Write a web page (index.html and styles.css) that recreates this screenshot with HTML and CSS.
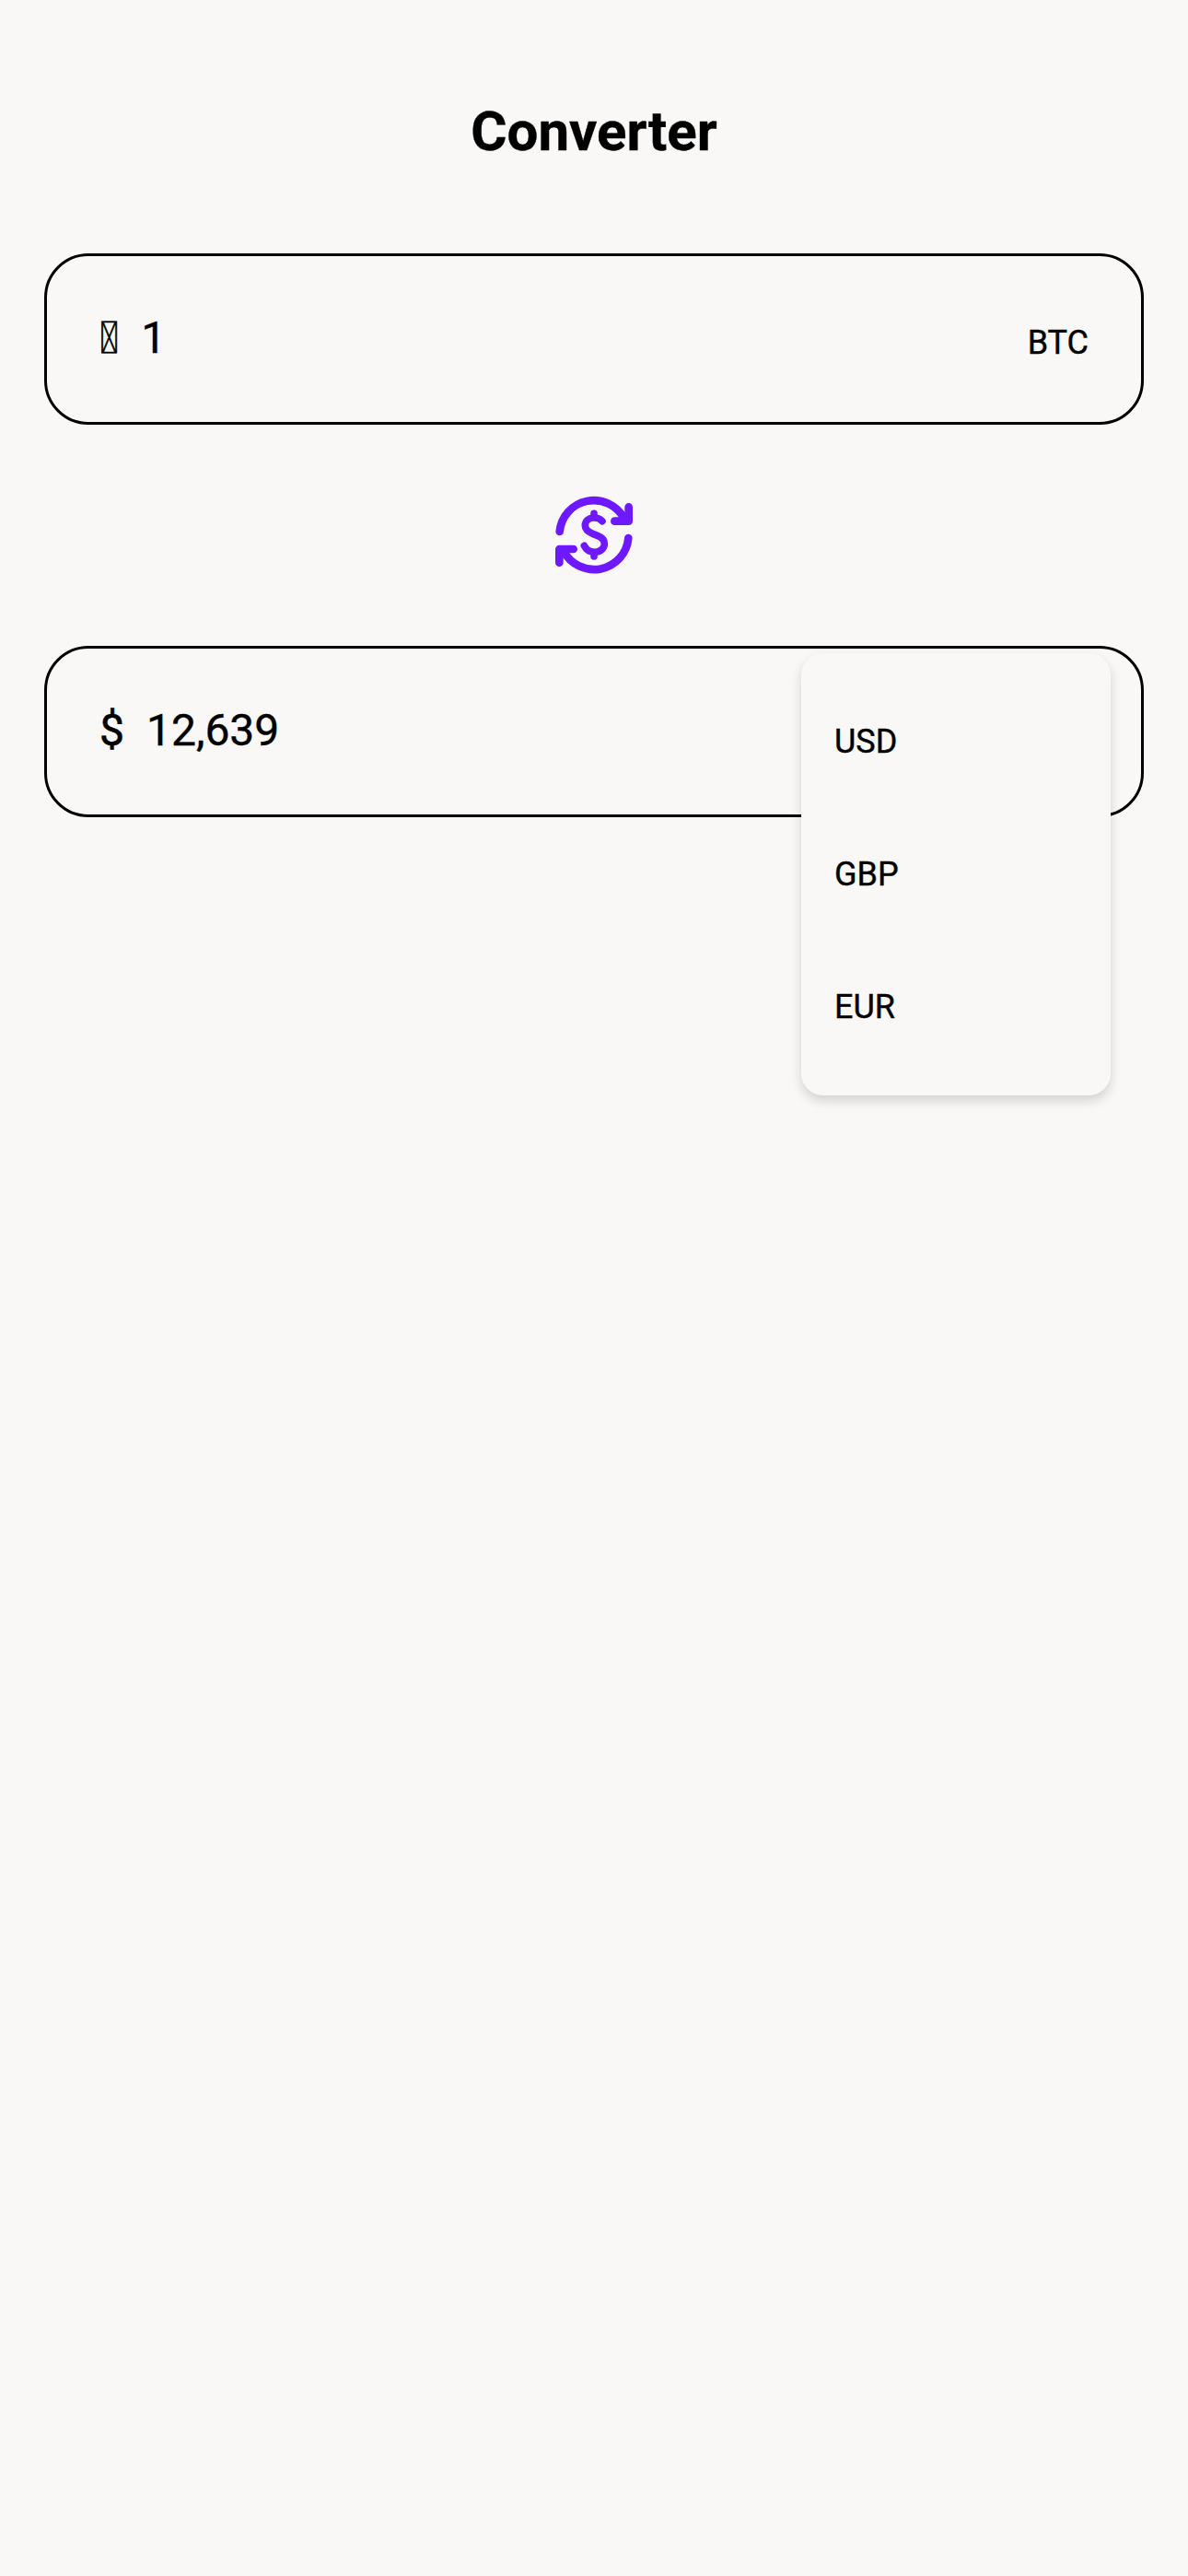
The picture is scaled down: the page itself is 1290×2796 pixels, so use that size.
FILE: index.html
```html
<!DOCTYPE html>
<html lang="en">
<head>
<meta charset="utf-8">
<title>Converter</title>
<link rel="stylesheet" href="styles.css">
</head>
<body>
<main class="screen">
  <h1 class="title">Converter</h1>
  <section class="field">
    <span class="amount"><span class="symbol">&#x10FFF0;</span><span>1</span></span>
    <span class="currency">BTC</span>
  </section>
  <button class="swap" aria-label="Swap currencies">
    <svg width="130" height="120" viewBox="0 0 390 360" fill="none" stroke="#6e18ff" stroke-width="26" stroke-linecap="round" stroke-linejoin="round">
      <path d="M83 171A112 112 0 0 1 293 128"/>
      <path d="M308 91V137H262"/>
      <path d="M307 192A112 112 0 0 1 96 234"/>
      <path d="M82 272V228H128"/>
      <path stroke-width="23" d="M222 137C215 129 206 126 195 126C178 126 166 137 166 151C166 165 176 172 191 178L206 184C222 190 229 198 229 211C229 227 214 238 197 238C180 238 170 231 163 217M195 112V126M195 238V252"/>
    </svg>
  </button>
  <section class="field">
    <span class="amount"><span class="symbol">$</span><span>12,639</span></span>
    <ul class="menu">
      <li class="option">USD</li>
      <li class="option">GBP</li>
      <li class="option">EUR</li>
    </ul>
  </section>
</main>
</body>
</html>
```
FILE: styles.css
```css
* {
  box-sizing: border-box;
}

body {
  margin: 0;
  background: #f9f8f6;
  color: #000;
  font-family: Roboto, sans-serif;
  -webkit-text-stroke: 0.4px;
}

.screen {
  display: flex;
  flex-direction: column;
  min-height: 2796px;
  padding: 107px 48px 0;
}

.title {
  margin: 0 0 96px;
  font-size: 60px;
  font-weight: 700;
  line-height: 72px;
  text-align: center;
}

.field {
  position: relative;
  display: flex;
  align-items: center;
  justify-content: space-between;
  height: 186px;
  padding: 0 57px;
  border: 3px solid #000;
  border-radius: 48px;
}

.amount {
  display: flex;
  gap: 24px;
  font-size: 48px;
  line-height: 56px;
  padding-bottom: 2px;
}

.symbol {
  -webkit-text-stroke: 0.6px;
}

.currency {
  font-size: 36px;
  line-height: 42px;
  padding-top: 7px;
}

.swap {
  display: flex;
  justify-content: center;
  height: 240px;
  padding: 59px 0 0;
  border: 0;
  background: none;
}

.menu {
  position: absolute;
  top: 5px;
  right: 33px;
  width: 336px;
  height: 480px;
  margin: 0;
  padding: 24px 36px;
  border-radius: 24px;
  background: #f9f8f6;
  box-shadow: 0 6px 12px rgba(40, 25, 50, 0.17);
  list-style: none;
}

.option {
  display: flex;
  align-items: center;
  height: 144px;
  font-size: 36px;
}
```
